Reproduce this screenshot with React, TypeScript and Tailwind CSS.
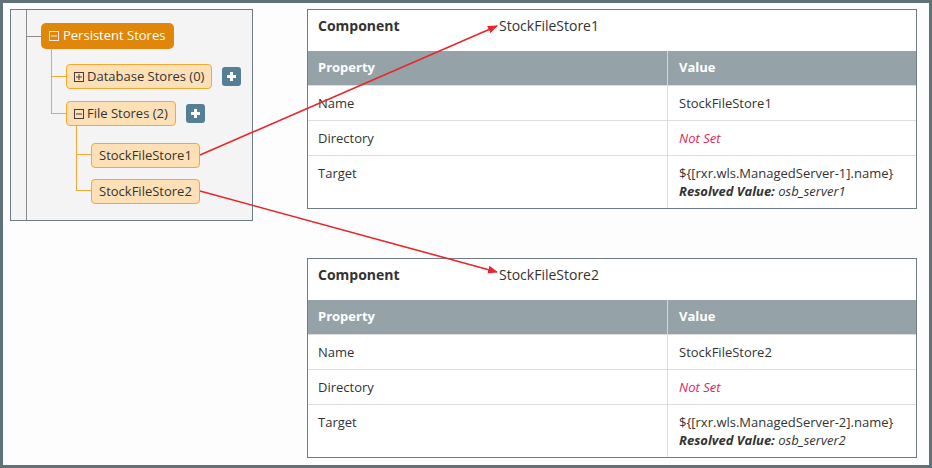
import React from 'react';

const font = { fontFamily: '"Open Sans", "Noto Sans", sans-serif' };

const BoxIcon: React.FC<{ plus?: boolean; light?: boolean }> = ({ plus, light }) => (
  <svg width="10" height="10" viewBox="0 0 10 10" className="shrink-0">
    <rect x="0.5" y="0.5" width="9" height="9" fill="none" stroke={light ? '#fde7ef' : '#4a3a3a'} strokeWidth="1" />
    <line x1="2" y1="5" x2="8" y2="5" stroke={light ? '#fde7ef' : '#4a3a3a'} strokeWidth="1" />
    {plus && <line x1="5" y1="2" x2="5" y2="8" stroke="#4a3a3a" strokeWidth="1" />}
  </svg>
);

const PlusButton: React.FC = () => (
  <div className="ml-[10px] w-[19px] h-[19px] rounded-[3px] bg-[#547f95] flex items-center justify-center">
    <svg width="9" height="9" viewBox="0 0 9 9">
      <rect x="3" y="0" width="3" height="9" fill="#fff" />
      <rect x="0" y="3" width="9" height="3" fill="#fff" />
    </svg>
  </div>
);

// connector column: vertical line + horizontal stub into the node
const Connector: React.FC<{ top: number; last?: boolean; color: string }> = ({ top, last, color }) => (
  <div className="w-[15px] shrink-0 flex flex-col">
    <div className={`border-l border-b ${color}`} style={{ height: top }} />
    <div className={`flex-1 ${last ? '' : `border-l ${color}`}`} />
  </div>
);

const nodeCls =
  'h-[25px] px-[7px] flex items-center gap-[3px] whitespace-nowrap rounded-[4px] border border-[#f5a733] bg-[#fee0b6] text-[13px] text-[#333]';

const TreePanel: React.FC = () => (
  <div className="w-[243px] h-[212px] border border-[#6e7c83] bg-[#f4f4f4] flex pl-[15px]">
    <div className="w-[15px] shrink-0 flex flex-col border-l border-[#8a8a8a]">
      <div className="h-[27px] border-b border-[#8a8a8a]" />
    </div>
    <div className="pt-[13px]">
      <div className="h-[26px] w-fit pl-[8px] pr-[9px] flex items-center gap-[4px] whitespace-nowrap rounded-[5px] bg-[#e0860b] text-white text-[13px]">
        <BoxIcon light />
        <span>Persistent Stores</span>
      </div>
      <div className="ml-[10px]">
        <div className="flex">
          <Connector top={28} color="border-[#f5a733]" />
          <div className="pt-[15px] flex items-center">
            <div className={nodeCls}>
              <BoxIcon plus />
              <span>Database Stores (0)</span>
            </div>
            <PlusButton />
          </div>
        </div>
        <div className="flex">
          <Connector top={25} last color="border-[#f5a733]" />
          <div className="pt-[12px]">
            <div className="flex items-center">
              <div className={nodeCls}>
                <BoxIcon />
                <span>File Stores (2)</span>
              </div>
              <PlusButton />
            </div>
            <div className="ml-[10px]">
              <div className="flex">
                <Connector top={29} color="border-[#f5a733]" />
                <div className="pt-[17px]">
                  <div className={nodeCls}>StockFileStore1</div>
                </div>
              </div>
              <div className="flex">
                <Connector top={23} last color="border-[#f5a733]" />
                <div className="pt-[11px]">
                  <div className={nodeCls}>StockFileStore2</div>
                </div>
              </div>
            </div>
          </div>
        </div>
      </div>
    </div>
  </div>
);

const PropTable: React.FC<{ name: string; server: number }> = ({ name, server }) => (
  <div className="w-[610px] border border-[#6e7c83] bg-white text-[#333]">
    <div className="h-[41px] flex pl-[10px] pt-[6px] text-[14px] leading-[20px]">
      <div className="w-[181px] font-bold">Component</div>
      <div>{name}</div>
    </div>
    <div className="flex h-[34px] bg-[#95a3a8] text-white font-bold text-[13px]">
      <div className="w-[360px] pl-[10px] flex items-center border-r border-[#d3d9db]">Property</div>
      <div className="flex-1 pl-[11px] flex items-center">Value</div>
    </div>
    {[
      { k: 'Name', h: 'h-[35px]', v: <span>{name}</span> },
      { k: 'Directory', h: 'h-[35px]', v: <span className="italic text-[#e0245e]">Not Set</span> },
      {
        k: 'Target',
        h: 'h-[53px]',
        v: (
          <div>
            <div>{`\${[rxr.wls.ManagedServer-${server}].name}`}</div>
            <div className="italic">
              <span className="font-bold">Resolved Value:</span> osb_server{server}
            </div>
          </div>
        ),
      },
    ].map((r) => (
      <div key={r.k} className={`flex border-t border-[#dddddd] text-[13px] leading-[18px] ${r.h}`}>
        <div className="w-[360px] pl-[10px] pt-[8px] border-r border-[#dddddd]">{r.k}</div>
        <div className="flex-1 pl-[11px] pt-[8px]">{r.v}</div>
      </div>
    ))}
  </div>
);

export default function App() {
  return (
    <div className="relative w-[932px] h-[468px]" style={font}>
      <div className="w-[932px] h-[468px] border-[3px] border-[#5f7179] bg-[#fdfdfd] flex pl-[7px] pt-[6px]">
        <TreePanel />
        <div className="ml-[54px] flex flex-col gap-[49px]">
          <PropTable name="StockFileStore1" server={1} />
          <PropTable name="StockFileStore2" server={2} />
        </div>
      </div>
      <svg className="absolute top-0 left-0 pointer-events-none" width="932" height="468">
        <defs>
          <marker id="ah" markerWidth="10" markerHeight="8" refX="9" refY="4" orient="auto" markerUnits="userSpaceOnUse">
            <path d="M0,0 L10,4 L0,8 Z" fill="#e8262b" />
          </marker>
        </defs>
        <line x1="200" y1="155" x2="497" y2="26" stroke="#e8262b" strokeWidth="1.6" markerEnd="url(#ah)" />
        <line x1="200" y1="191" x2="497" y2="272" stroke="#e8262b" strokeWidth="1.6" markerEnd="url(#ah)" />
      </svg>
    </div>
  );
}
